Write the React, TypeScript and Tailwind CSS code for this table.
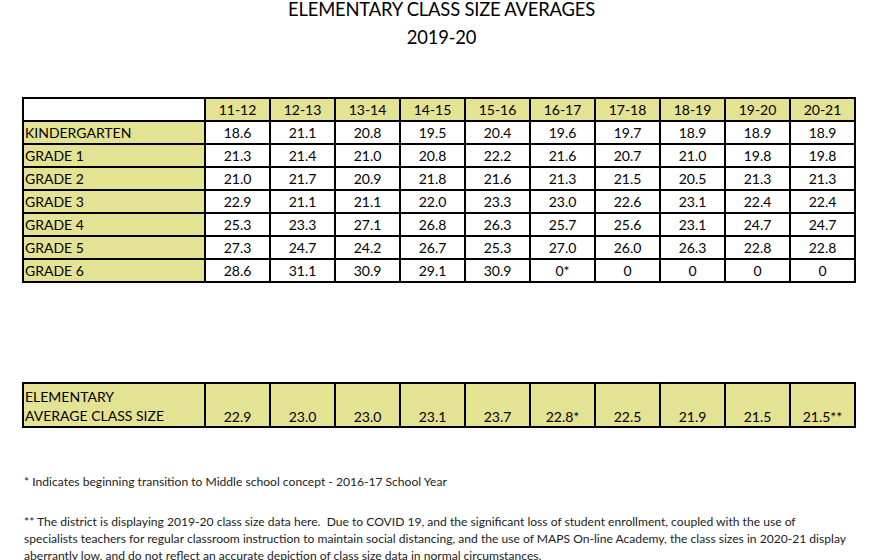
const years = ["11-12", "12-13", "13-14", "14-15", "15-16", "16-17", "17-18", "18-19", "19-20", "20-21"];

const rows: { grade: string; values: string[] }[] = [
  { grade: "KINDERGARTEN", values: ["18.6", "21.1", "20.8", "19.5", "20.4", "19.6", "19.7", "18.9", "18.9", "18.9"] },
  { grade: "GRADE 1", values: ["21.3", "21.4", "21.0", "20.8", "22.2", "21.6", "20.7", "21.0", "19.8", "19.8"] },
  { grade: "GRADE 2", values: ["21.0", "21.7", "20.9", "21.8", "21.6", "21.3", "21.5", "20.5", "21.3", "21.3"] },
  { grade: "GRADE 3", values: ["22.9", "21.1", "21.1", "22.0", "23.3", "23.0", "22.6", "23.1", "22.4", "22.4"] },
  { grade: "GRADE 4", values: ["25.3", "23.3", "27.1", "26.8", "26.3", "25.7", "25.6", "23.1", "24.7", "24.7"] },
  { grade: "GRADE 5", values: ["27.3", "24.7", "24.2", "26.7", "25.3", "27.0", "26.0", "26.3", "22.8", "22.8"] },
  { grade: "GRADE 6", values: ["28.6", "31.1", "30.9", "29.1", "30.9", "0*", "0", "0", "0", "0"] },
];

const averages = ["22.9", "23.0", "23.0", "23.1", "23.7", "22.8*", "22.5", "21.9", "21.5", "21.5**"];

function ColGroup() {
  return (
    <colgroup>
      <col className="w-[182px]" />
      {years.map((y) => (
        <col key={y} className="w-[65px]" />
      ))}
    </colgroup>
  );
}

export default function App() {
  return (
    <div className="w-[883px] h-[560px] overflow-hidden bg-white text-black font-['Lato','Noto_Sans',sans-serif]">
      <div className="text-center text-[18.4px] leading-[28px] -mt-[5px] tracking-[-0.2px]">
        <div>ELEMENTARY CLASS SIZE AVERAGES</div>
        <div>2019-20</div>
      </div>

      <table className="ml-[22px] mt-[46px] w-[831px] table-fixed border-collapse text-[14px]">
        <ColGroup />
        <thead>
          <tr className="h-[23px]">
            <th className="border-2 border-black bg-white"></th>
            {years.map((y) => (
              <th key={y} className="border-2 border-black bg-[#e4e293] font-normal text-center leading-none">
                {y}
              </th>
            ))}
          </tr>
        </thead>
        <tbody>
          {rows.map((r) => (
            <tr key={r.grade} className="h-[23px]">
              <td className="border-2 border-black bg-[#e4e293] pl-[1px] leading-none">{r.grade}</td>
              {r.values.map((v, i) => (
                <td key={i} className="border-2 border-black text-center leading-none">
                  {v}
                </td>
              ))}
            </tr>
          ))}
        </tbody>
      </table>

      <table className="ml-[22px] mt-[99px] w-[831px] table-fixed border-collapse text-[14px] bg-[#e4e293]">
        <ColGroup />
        <tbody>
          <tr className="h-[44px]">
            <td className="border-2 border-black pl-[1px] leading-[19px] align-bottom pb-[1px]">
              ELEMENTARY
              <br />
              AVERAGE CLASS SIZE
            </td>
            {averages.map((v, i) => (
              <td key={i} className="border-2 border-black text-center align-bottom pb-[2px] leading-none">
                {v}
              </td>
            ))}
          </tr>
        </tbody>
      </table>

      <div className="ml-[24px] text-[12.1px] text-[#222] leading-[17px]">
        <p className="mt-[45px] whitespace-nowrap">
          * Indicates beginning transition to Middle school concept - 2016-17 School Year
        </p>
        <p className="mt-[23px] whitespace-nowrap">
          ** The district is displaying 2019-20 class size data here.&nbsp; Due to COVID 19, and the significant loss of student enrollment, coupled with the use of
          <br />
          specialists teachers for regular classroom instruction to maintain social distancing, and the use of MAPS On-line Academy, the class sizes in 2020-21 display
          <br />
          aberrantly low, and do not reflect an accurate depiction of class size data in normal circumstances.
        </p>
      </div>
    </div>
  );
}
